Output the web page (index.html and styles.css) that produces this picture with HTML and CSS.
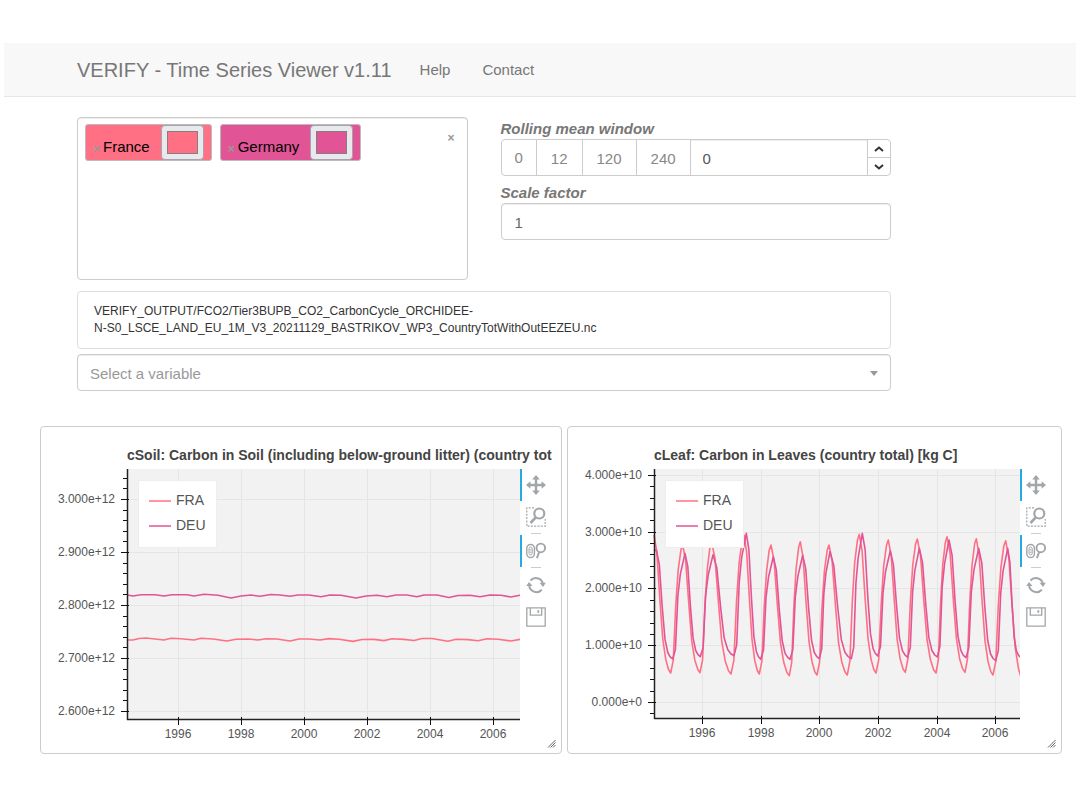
FILE: index.html
```html
<!DOCTYPE html>
<html lang="en">
<head>
<meta charset="utf-8">
<title>VERIFY - Time Series Viewer</title>
<link rel="stylesheet" href="styles.css">
</head>
<body>
<svg class="sprite" aria-hidden="true">
  <symbol id="i-pan" viewBox="0 0 20 20"><path d="M10 0l3.800 4.400H11.200V8.800h4.400V6.200L20 10l-4.400 3.800V11.200H11.200v4.400h2.600L10 20l-3.800-4.400H8.800V11.200H4.400v2.600L0 10l4.400-3.800V8.800H8.800V4.400H6.200z" fill="#a1a6a9"/></symbol>
  <symbol id="i-box" viewBox="0 0 20 20"><path d="M8 .8H.8v18.400h18.400V12" fill="none" stroke="#a1a6a9" stroke-width="1.200" stroke-dasharray="2 1.300"/><circle cx="13.300" cy="6.500" r="5" fill="none" stroke="#a1a6a9" stroke-width="2.200"/><path d="M9.800 10.300l-5.300 5.700" stroke="#a1a6a9" stroke-width="2.600"/></symbol>
  <symbol id="i-wheel" viewBox="0 0 20 20"><g fill="none" stroke="#a1a6a9"><rect x=".8" y="3.500" width="7.600" height="13" rx="3.800" stroke-width="1.400"/><rect x="3" y="6" width="3.200" height="8" rx="1.600"/><path d="M3.600 8.800h2M3.600 11.200h2"/><circle cx="14.800" cy="6.900" r="4.300" stroke-width="1.900"/><path d="M13.200 11l-2.300 6.200" stroke-width="2"/></g></symbol>
  <symbol id="i-reset" viewBox="0 0 20 20"><path d="M4.500 5.500A7.300 7.300 0 0 1 16.800 8M3.200 10A7.300 7.300 0 0 0 15.800 14.800" fill="none" stroke="#a1a6a9" stroke-width="2"/><path d="M.3 11h6.200L3 7zM13.600 7.800h6.200L17 12z" fill="#a1a6a9"/></symbol>
  <symbol id="i-save" viewBox="0 0 20 20"><g fill="none" stroke="#a1a6a9" stroke-width="1.300"><path d="M.8.800h18.400v18.400H.8zM4.300.800v7.400h11.400V.8"/><path d="M12.300 3.200v2.600" stroke-width="1.800"/></g></symbol>
</svg>

<nav class="navbar">
  <a class="brand" href="#">VERIFY - Time Series Viewer v1.11</a>
  <a class="nav-link" href="#help">Help</a>
  <a class="nav-link" href="#contact">Contact</a>
</nav>

<main>
  <section class="controls">
    <div class="columns">
      <div class="field countries">
        <div class="tag france"><button class="remove" aria-label="Remove France">×</button><label for="c-fra">France</label><input id="c-fra" type="color" value="#ff7085"></div>
        <div class="tag germany"><button class="remove" aria-label="Remove Germany">×</button><label for="c-deu">Germany</label><input id="c-deu" type="color" value="#e15596"></div>
        <button class="remove clear" aria-label="Clear all">×</button>
      </div>
      <div class="settings">
        <label class="caption" for="rolling">Rolling mean window</label>
        <div class="group">
          <button class="preset">0</button><button class="preset">12</button><button class="preset">120</button><button class="preset">240</button>
          <input id="rolling" type="text" inputmode="numeric" value="0">
          <div class="spin">
            <button aria-label="Increase"><svg width="10" height="6" viewBox="0 0 10 6"><path d="M1 5l4-3.500L9 5" /></svg></button>
            <button aria-label="Decrease"><svg width="10" height="6" viewBox="0 0 10 6"><path d="M1 1l4 3.500L9 1" /></svg></button>
          </div>
        </div>
        <label class="caption" for="scale">Scale factor</label>
        <input id="scale" class="field scale" type="text" value="1">
      </div>
    </div>
    <p class="file">VERIFY_OUTPUT/FCO2/Tier3BUPB_CO2_CarbonCycle_ORCHIDEE-<br>N-S0_LSCE_LAND_EU_1M_V3_20211129_BASTRIKOV_WP3_CountryTotWithOutEEZEU.nc</p>
    <div class="select-wrap">
      <select class="field variable" aria-label="Variable"><option>Select a variable</option></select>
    </div>
  </section>

  <section class="plots">
    <article class="plot">
      <h2>cSoil: Carbon in Soil (including below-ground litter) (country total) [kg C]</h2>
      <svg class="chart" viewBox="0 0 479 275" id="csoil"></svg>
      <div class="toolbar">
        <button class="active" aria-label="Pan"><svg><use href="#i-pan"/></svg></button>
        <button aria-label="Box zoom"><svg><use href="#i-box"/></svg></button>
        <hr>
        <button class="active" aria-label="Wheel zoom"><svg><use href="#i-wheel"/></svg></button>
        <hr>
        <button aria-label="Reset"><svg><use href="#i-reset"/></svg></button>
        <button aria-label="Save"><svg><use href="#i-save"/></svg></button>
      </div>
      <svg class="grip" viewBox="0 0 9 9"><path d="M1 8.500L8.500 1M3.500 8.500l5-5M6 8.500L8.500 6"/></svg>
    </article>
    <article class="plot">
      <h2>cLeaf: Carbon in Leaves (country total) [kg C]</h2>
      <svg class="chart" viewBox="0 0 452 275" id="cleaf"></svg>
      <div class="toolbar">
        <button class="active" aria-label="Pan"><svg><use href="#i-pan"/></svg></button>
        <button aria-label="Box zoom"><svg><use href="#i-box"/></svg></button>
        <hr>
        <button class="active" aria-label="Wheel zoom"><svg><use href="#i-wheel"/></svg></button>
        <hr>
        <button aria-label="Reset"><svg><use href="#i-reset"/></svg></button>
        <button aria-label="Save"><svg><use href="#i-save"/></svg></button>
      </div>
      <svg class="grip" viewBox="0 0 9 9"><path d="M1 8.500L8.500 1M3.500 8.500l5-5M6 8.500L8.500 6"/></svg>
    </article>
  </section>
</main>
<script src="charts.js"></script>
</body>
</html>
```
FILE: styles.css
```css
* { box-sizing: border-box; }
body {
  margin: 43px 4px 0;
  background: #fff;
  color: #333;
  font: 15px/20px "Liberation Sans", Arial, sans-serif;
}
button, input, select { font: inherit; margin: 0; }
button { padding: 0; border: 0; background: none; cursor: pointer; }
.sprite { position: absolute; width: 0; height: 0; }

.navbar {
  display: flex;
  align-items: center;
  height: 54px;
  padding-left: 73px;
  background: #f8f8f8;
  border-bottom: 1px solid #e7e7e7;
}
.navbar a { color: #777; text-decoration: none; }
.brand { font-size: 20px; margin-right: 28px; }
.nav-link { margin-right: 32px; }

.controls { max-width: 887px; padding: 20px 0 0 73px; }
.columns { display: grid; grid-template-columns: repeat(2, minmax(0, 1fr)); gap: 33px; }
.field {
  border: 1px solid #ccc;
  border-radius: 4px;
  background: #fff;
  box-shadow: inset 0 1px 1px rgba(0, 0, 0, .075);
}
.countries {
  display: flex;
  align-items: flex-start;
  gap: 8px;
  height: 163px;
  padding: 6px 12px 0 7px;
}
.tag {
  display: flex;
  align-items: center;
  height: 37px;
  padding: 0 7px;
  border: 1px solid #bbb;
  border-radius: 3px;
  color: #000;
}
.france { background: #ff7085; }
.germany { background: #e15596; }
.remove { color: #999; font-size: 12px; font-weight: bold; line-height: 14px; }
.tag .remove { width: 7px; margin-right: 3px; padding-top: 12px; }
.tag label { padding: 9px 11px 0 0; }
.tag input {
  width: 43px;
  height: 35px;
  padding: 5px;
  border: 1px solid #a5a5b0;
  border-radius: 4px;
  background: #e9e9ed;
}
.tag input::-webkit-color-swatch-wrapper { padding: 0; }
.tag input::-webkit-color-swatch { border: 1px solid #808080; border-radius: 0; }
.clear { margin: 7px 0 0 auto; }

.settings { display: flex; flex-direction: column; }
.caption { padding-top: 2px; color: #777; font-weight: bold; font-style: italic; }
.group {
  display: flex;
  height: 37px;
  margin-bottom: 5px;
  border: 1px solid #ccc;
  border-radius: 4px;
  overflow: hidden;
}
.preset { padding: 0 14px; border-right: 1px solid #ccc; color: #888; }
.preset:first-child { padding: 0 13px; }
.group input {
  flex: 1;
  min-width: 0;
  padding: 2px 12px 0;
  border: 0;
  color: #555;
  box-shadow: inset 0 1px 1px rgba(0, 0, 0, .075);
}
.preset { padding-top: 2px; }
.spin { display: flex; flex-direction: column; width: 23px; border-left: 1px solid #ccc; }
.spin button { flex: 1; display: flex; align-items: center; justify-content: center; }
.spin button + button { border-top: 1px solid #ccc; }
.spin path { fill: none; stroke: #333; stroke-width: 2; }
.scale { height: 37px; padding: 2px 13px 0; color: #666; }

.file {
  margin: 11px 0 5px;
  padding: 11px 16px;
  border: 1px solid #ddd;
  border-radius: 4px;
  font-size: 12px;
  line-height: 17px;
}
.select-wrap { position: relative; }
.variable {
  display: block;
  width: 100%;
  height: 37px;
  padding: 2px 12px 0;
  color: #999;
  appearance: none;
}
.select-wrap::after {
  content: "";
  position: absolute;
  top: 17px;
  right: 13px;
  border: 4px solid transparent;
  border-top: 5px solid #999;
  border-bottom: 0;
  pointer-events: none;
}

.plots {
  display: grid;
  grid-template-columns: 522fr 495fr;
  align-items: start;
  gap: 5px;
  margin: 35px 14px 0 36px;
}
.plot {
  position: relative;
  display: grid;
  grid-template-columns: 1fr 30px;
  padding: 18px 11px 9px 0;
  border: 1px solid #ccc;
  border-radius: 4px;
}
.plot h2 {
  grid-column: 1 / -1;
  margin: 0 -2px 4px 86px;
  overflow: hidden;
  white-space: nowrap;
  color: #444;
  font-size: 14px;
  line-height: 20px;
}
.chart { display: block; width: 100%; }
.chart text { fill: #555; font-size: 12px; }
.chart .key { font-size: 14px; }
.toolbar { display: flex; flex-direction: column; }
.toolbar button {
  display: grid;
  place-items: center;
  height: 32px;
  border-left: 2px solid transparent;
}
.toolbar .active { border-left-color: #26aae1; }
.toolbar svg { width: 20px; height: 20px; }
.toolbar hr { width: 10px; height: 1px; margin: 0 10px 1px 11px; border: 0; background: #ccc; }
.grip { position: absolute; right: 5px; bottom: 5px; width: 9px; height: 9px; }
.grip path { stroke: #666; fill: none; }
```
FILE: charts.js
```js
const FRA = "#ff7085", DEU = "#e15596", LEFT = 86;

function line(x1, y1, x2, y2, color, width = 1) {
  return `<path d="M${x1} ${y1}L${x2} ${y2}" stroke="${color}" stroke-width="${width}" fill="none"/>`;
}

function curve(points, color) {
  return `<path d="M${points.map(p => p.join(" ")).join("L")}" stroke="${color}" stroke-width="1.600" stroke-linejoin="round" fill="none"/>`;
}

function draw(id, o) {
  const { right, bottom } = o;
  let s = `<rect x="${LEFT}" y="0" width="${right - LEFT}" height="${bottom}" fill="#f2f2f2"/>`;
  o.ys.forEach(y => { s += line(LEFT, y + .5, right, y + .5, "#e5e5e5"); });
  o.xs.forEach(x => { s += line(x + .5, 0, x + .5, bottom, "#e5e5e5"); });
  s += curve(o.fra, FRA) + curve(o.deu, DEU);
  s += line(LEFT + .5, 0, LEFT + .5, bottom + 1, "#222", 1.5) + line(LEFT, bottom + .5, right, bottom + .5, "#222", 1.5);
  const step = (o.ys[o.ys.length - 1] - o.ys[0]) / (o.ys.length - 1) / 5;
  for (let k = -5; k < 30; k++) {
    const y = Math.round(o.ys[0] + k * step) + .5;
    if (k % 5 && y > 1 && y < bottom) s += line(82, y, LEFT, y, "#111");
  }
  o.ys.forEach((y, i) => {
    s += line(80, y + .5, 88, y + .5, "#111");
    s += `<text x="74" y="${y + 4}" text-anchor="end">${o.labels[i]}</text>`;
  });
  o.xs.forEach((x, i) => {
    s += line(x + .5, bottom - 2, x + .5, bottom + 6, "#111");
    s += `<text x="${x}" y="${bottom + 19}" text-anchor="middle">${1996 + 2 * i}</text>`;
  });
  s += `<rect x="97.500" y="11.500" width="78" height="67" fill="#fff" fill-opacity=".95" stroke="#eee"/>`;
  s += line(108, 32, 130, 32, FRA, 1.5) + line(108, 57, 130, 57, DEU, 1.5);
  s += `<text class="key" x="135" y="36">FRA</text><text class="key" x="135" y="61">DEU</text>`;
  document.getElementById(id).innerHTML = s;
}

/* Alternating peaks and troughs joined by the monthly shape of the season. */
function seasonal(turns, rise, fall) {
  const out = [turns[0]];
  for (let i = 1; i < turns.length; i++) {
    const [x0, y0] = turns[i - 1], [x1, y1] = turns[i];
    (y1 < y0 ? rise : fall).forEach(([t, h]) => out.push([(x0 + t * (x1 - x0)).toFixed(1), (y0 + h * (y1 - y0)).toFixed(1)]));
    out.push([x1, y1]);
  }
  return out;
}

draw("csoil", {
  right: 479, bottom: 250,
  ys: [30, 83, 136, 189, 242],
  labels: ["3.000e+12", "2.900e+12", "2.800e+12", "2.700e+12", "2.600e+12"],
  xs: [137, 200, 263, 326, 389, 452],
  fra: [[86,171],[92,171],[98,169.5],[105,169],[114,170],[123,171],[130,169.3],[140,169.7],[153,171],[160,169.3],[172,170],[186,172],[195,170.3],[207,170],[217,171],[225,169.7],[236,170],[249,172],[258,170],[268,170],[279,171],[288,169.6],[298,170.2],[312,172.4],[321,170.5],[333,170.4],[343,171.6],[351,169.8],[363,170.4],[373,171.5],[381,169.5],[391,169.5],[407,172.2],[415,170.3],[427,170.6],[437,171.8],[446,169.8],[457,170.2],[470,172],[479,170.4]],
  deu: [[86,126],[92,127],[100,125.700],[114,125.700],[123,127],[131,125.700],[146,125.700],[153,127],[163,125.300],[177,126.300],[190,129],[200,127],[210,126],[219,127.300],[230,125.500],[239,126],[249,127.300],[257,126],[268,126],[280,127.700],[289,126],[300,126.300],[315,129],[325,127],[336,126.300],[346,127.700],[355,126],[366,126],[376,127.700],[383,126],[396,126],[408,128.500],[417,126.500],[429,126.300],[439,127.700],[449,126],[460,126.300],[470,128],[479,126.300]]
});

draw("cleaf", {
  right: 452, bottom: 249,
  ys: [6, 63, 119, 176, 233],
  labels: ["4.000e+10", "3.000e+10", "2.000e+10", "1.000e+10", "0.000e+0"],
  xs: [134, 193, 251, 310, 369, 427],
  fra: seasonal(
    [[86,66],[102.7,204],[114.7,76],[132,203.7],[143.7,73.7],[163,205],[176,66],[191.3,205],[203,76],[221.3,206.7],[232.3,72.7],[249,206],[261,76],[279.3,206],[291.3,65.3],[308,204],[320.3,71],[337.3,203.3],[349.3,70],[368,204],[379,67.7],[397,203.3],[408.3,69.7],[425,206],[437.7,71.7],[456,214]],
    [[.22,.1],[.42,.52],[.62,.8],[.85,.96]],
    [[.17,.12],[.35,.46],[.52,.75],[.7,.9],[.87,.975]]),
  deu: seasonal(
    [[86,82],[88.3,81],[104.7,190],[117,84.3],[132.3,187.7],[145,85.7],[166,186.7],[178.3,64.3],[192.7,190.3],[205.3,87.7],[222,190.3],[234.7,86.3],[251.3,189.7],[262,82.7],[283.3,189.7],[294.3,64.3],[309.7,187],[322.3,81.7],[339.7,188.3],[351.3,79.3],[369.3,188],[381,71],[398,188.7],[410.7,79.3],[427.7,191.7],[439.7,79.3],[452,188]],
    [[.22,.09],[.42,.6],[.62,.8]],
    [[.18,.13],[.36,.52],[.53,.82],[.7,.94],[.85,.98]])
});
```
